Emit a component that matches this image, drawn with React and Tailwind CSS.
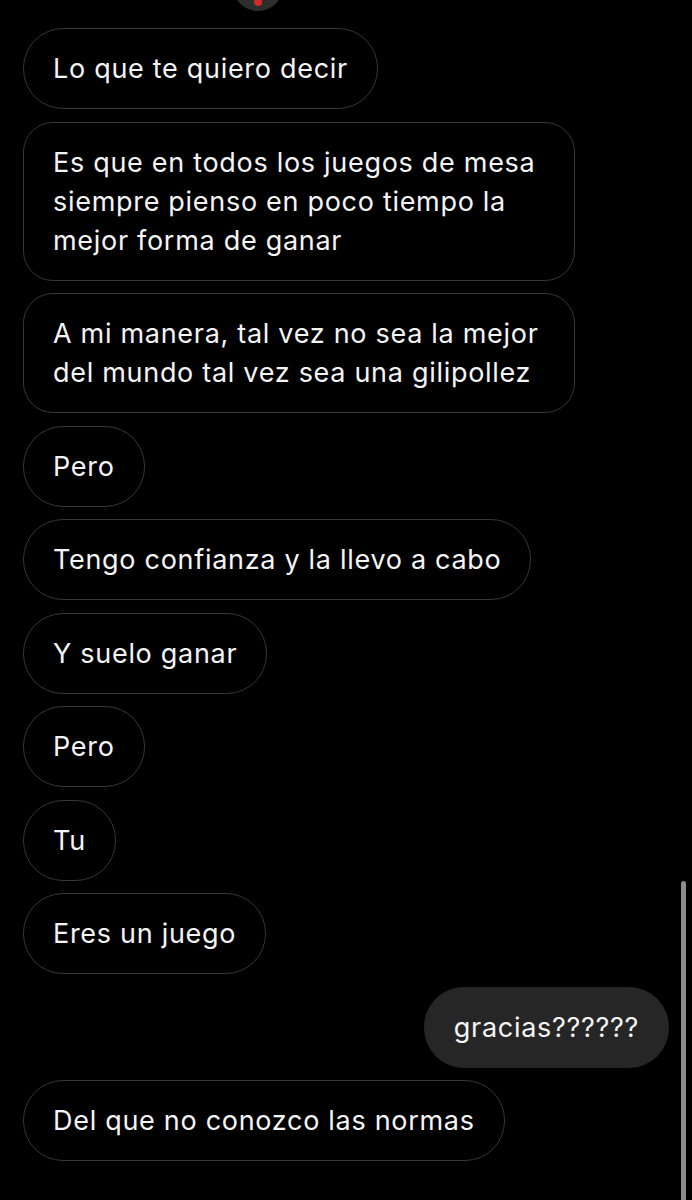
const messages = [
  { text: "Lo que te quiero decir" },
  { text: "Es que en todos los juegos de mesa siempre pienso en poco tiempo la mejor forma de ganar", multi: true },
  { text: "A mi manera, tal vez no sea la mejor del mundo tal vez sea una gilipollez", multi: true },
  { text: "Pero" },
  { text: "Tengo confianza y la llevo a cabo" },
  { text: "Y suelo ganar" },
  { text: "Pero" },
  { text: "Tu" },
  { text: "Eres un juego" },
  { text: "gracias??????", mine: true },
  { text: "Del que no conozco las normas" },
];

const App = () => {
  return (
    <div
      className="relative h-[1200px] overflow-hidden bg-black text-[#f4f4f4]"
      style={{ fontFamily: "Inter, 'Noto Sans', sans-serif" }}
    >
      {/* floating reaction button, cut off at the top */}
      <div className="absolute left-[233px] top-[-39px] w-[50px] h-[50px] rounded-full bg-[#2e2e2e] flex items-center justify-center">
        <div className="mt-[32px] w-[8px] h-[8px] rounded-full bg-[#d42a2a]" />
      </div>

      {/* scroll indicator */}
      <div className="absolute left-[681px] top-[881px] w-[5px] h-[340px] rounded-full bg-[#8c8c8c]" />

      <div className="flex flex-col items-start gap-[12.5px] px-[23px] pt-[28px]">
        {messages.map((m, i) =>
          m.mine ? (
            <div
              key={i}
              className="self-end rounded-[40px] bg-[#262626] px-[30px] py-[21px] text-[27px] leading-[39px] tracking-[0.7px]"
            >
              {m.text}
            </div>
          ) : m.multi ? (
            <div
              key={i}
              className="w-[552px] rounded-[30px] border border-[#363636] pl-[29px] pr-[18px] py-[20px] text-[27px] leading-[39px] tracking-[0.7px]"
            >
              {m.text}
            </div>
          ) : (
            <div
              key={i}
              className="rounded-[40px] border border-[#363636] px-[29px] py-[20px] text-[27px] leading-[39px] tracking-[0.7px]"
            >
              {m.text}
            </div>
          )
        )}
      </div>
    </div>
  );
};

export default App;
